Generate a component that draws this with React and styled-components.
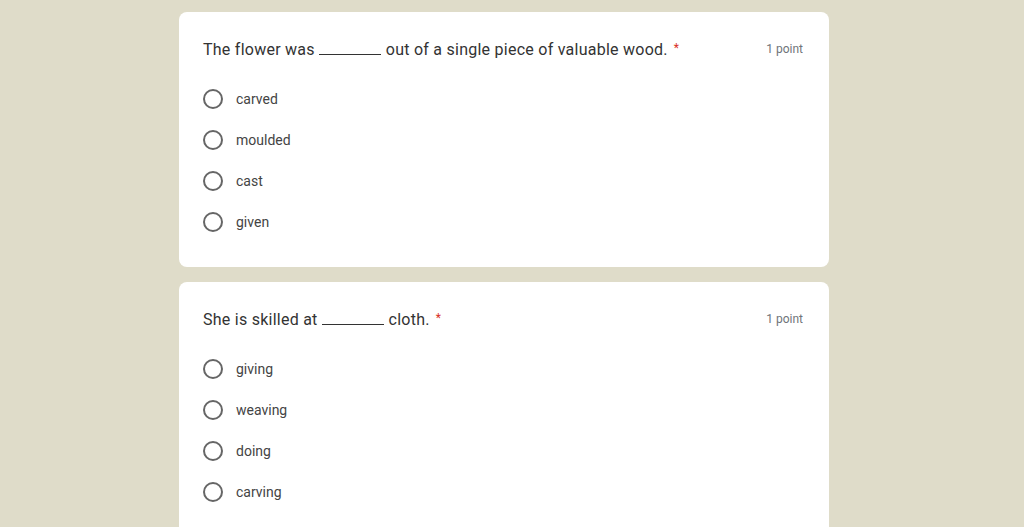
import React from 'react';
import styled, { createGlobalStyle } from 'styled-components';

const GlobalStyle = createGlobalStyle`
  html, body {
    margin: 0;
    padding: 0;
    background: #dfdcc9;
    font-family: 'Roboto', 'Liberation Sans', sans-serif;
    overflow: hidden;
  }
`;

const Page = styled.div`
  display: flex;
  flex-direction: column;
  align-items: center;
  gap: 15px;
  padding: 12px 16px 0 0;
  height: 527px;
  box-sizing: border-box;
`;

const Card = styled.div`
  width: 650px;
  background: #fff;
  border-radius: 8px;
  padding: 25px 24px 25px 24px;
  box-sizing: border-box;
  flex-shrink: 0;
`;

const Header = styled.div`
  display: flex;
  justify-content: space-between;
  align-items: center;
  height: 24px;
`;

const Title = styled.div`
  font-size: 16px;
  color: #333333;
  letter-spacing: 0.25px;
`;

const Blank = styled.span`
  display: inline-block;
  width: 62px;
  border-bottom: 1px solid #333333;
  margin: 0 5px 0 4px;
  height: 12px;
`;

const Star = styled.span`
  color: #d93025;
  margin-left: 6px;
  font-size: 12px;
  vertical-align: 3px;
`;

const Points = styled.div`
  font-size: 12px;
  color: #70757a;
  margin-right: 2px;
`;

const Options = styled.div`
  display: flex;
  flex-direction: column;
  margin-top: 17px;
`;

const Option = styled.label`
  display: flex;
  align-items: center;
  height: 41px;
  gap: 13px;
`;

const Radio = styled.span`
  width: 20px;
  height: 20px;
  box-sizing: border-box;
  border: 2px solid #666666;
  border-radius: 50%;
  flex-shrink: 0;
`;

const OptionText = styled.span`
  font-size: 14px;
  color: #444444;
`;

const questions = [
  {
    before: 'The flower was',
    after: 'out of a single piece of valuable wood.',
    options: ['carved', 'moulded', 'cast', 'given'],
  },
  {
    before: 'She is skilled at',
    after: 'cloth.',
    options: ['giving', 'weaving', 'doing', 'carving'],
  },
];

export default function App() {
  return (
    <>
      <GlobalStyle />
      <Page>
        {questions.map((q, i) => (
          <Card key={i}>
            <Header>
              <Title>
                {q.before}
                <Blank />
                {q.after}
                <Star>*</Star>
              </Title>
              <Points>1 point</Points>
            </Header>
            <Options>
              {q.options.map((o) => (
                <Option key={o}>
                  <Radio />
                  <OptionText>{o}</OptionText>
                </Option>
              ))}
            </Options>
          </Card>
        ))}
      </Page>
    </>
  );
}
